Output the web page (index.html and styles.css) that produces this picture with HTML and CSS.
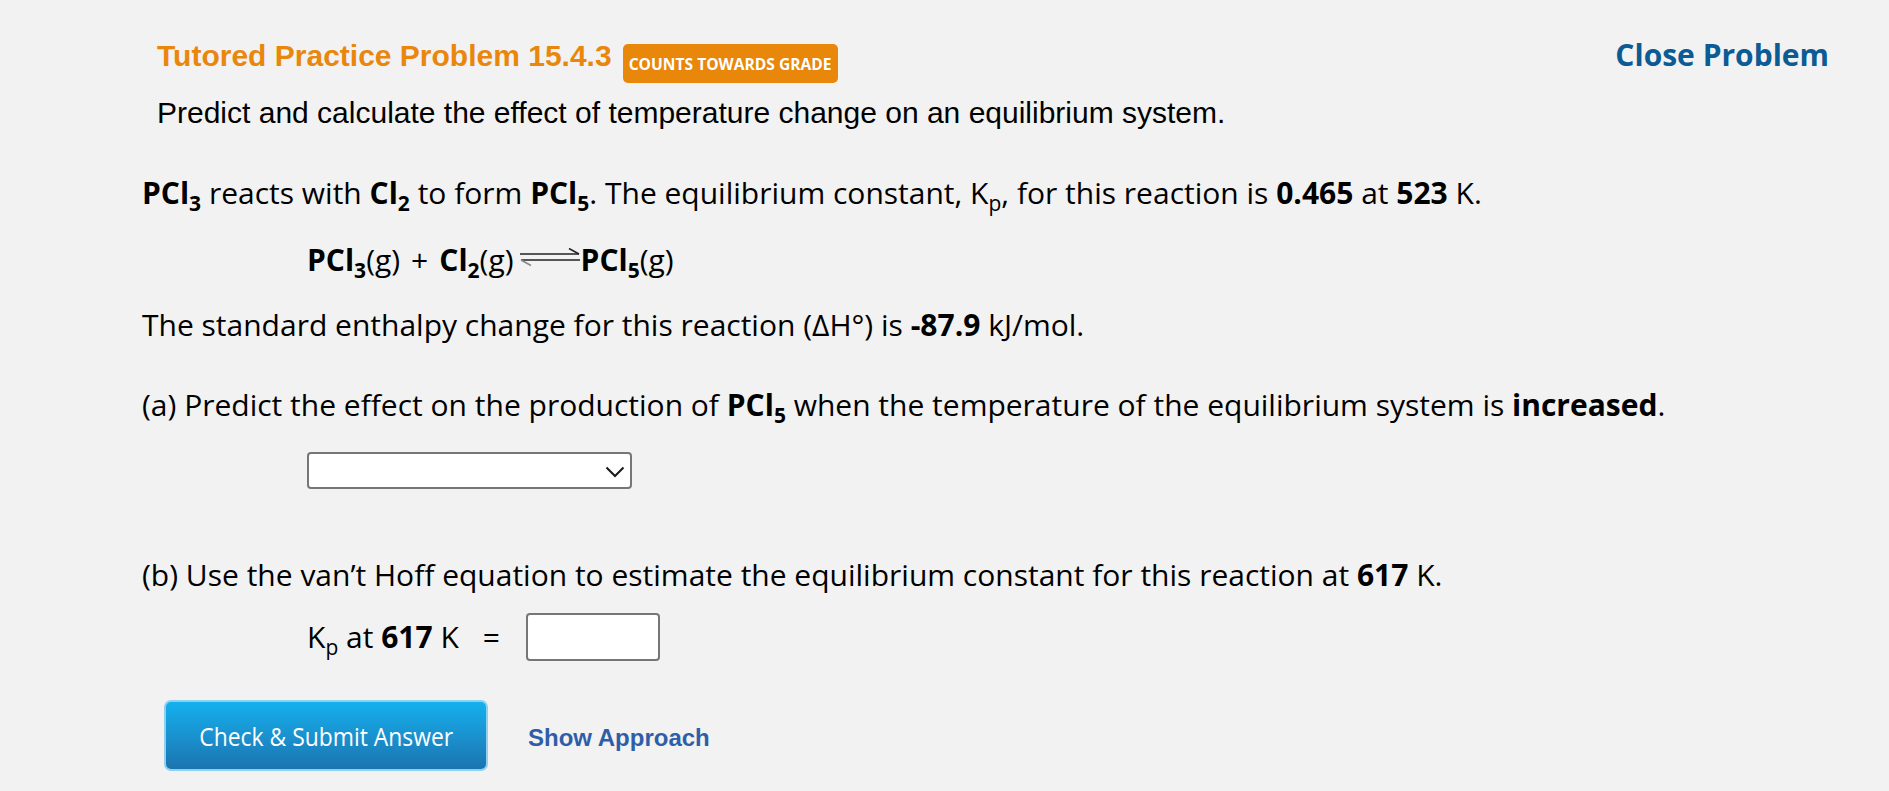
FILE: index.html
```html
<!DOCTYPE html>
<html lang="en">
<head>
<meta charset="utf-8">
<title>Tutored Practice Problem 15.4.3</title>
<link rel="stylesheet" href="styles.css">
</head>
<body>
<div class="page">
  <header class="header">
    <div class="header-main">
      <div class="title-row">
        <h1 class="title">Tutored Practice Problem 15.4.3</h1>
        <span class="badge">COUNTS TOWARDS GRADE</span>
      </div>
      <p class="subtitle">Predict and calculate the effect of temperature change on an equilibrium system.</p>
    </div>
    <a class="close-link" href="#">Close Problem</a>
  </header>

  <main class="problem">
    <p class="line intro"><b>PCl<sub>3</sub></b> reacts with <b>Cl<sub>2</sub></b> to form <b>PCl<sub>5</sub></b>. The equilibrium constant, K<sub class="reg">p</sub>, for this reaction is <b>0.465</b> at <b>523</b> K.</p>

    <p class="line equation"><b>PCl<sub>3</sub></b>(g)<span class="plus">+</span><b>Cl<sub>2</sub></b>(g)<svg class="eq-arrow" width="60" height="20" viewBox="0 0 60 20" aria-hidden="true"><line x1="0" y1="6" x2="59" y2="6" stroke="#222" stroke-width="1.6"/><line x1="59" y1="6" x2="49" y2="0.5" stroke="#222" stroke-width="1.6"/><line x1="1" y1="12" x2="60" y2="12" stroke="#222" stroke-width="1.6"/><line x1="1" y1="12" x2="11" y2="17.5" stroke="#888" stroke-width="1.6"/></svg><b>PCl<sub>5</sub></b>(g)</p>

    <p class="line enthalpy">The standard enthalpy change for this reaction (ΔH°) is <b>-87.9</b> kJ/mol.</p>

    <p class="line part-a">(a) Predict the effect on the production of <b>PCl<sub>5</sub></b> when the temperature of the equilibrium system is <b>increased</b>.</p>

    <div class="select-wrap">
      <select class="answer-select" aria-label="Effect on production">
        <option></option>
      </select>
      <svg class="chevron" width="20" height="12" viewBox="0 0 20 12" aria-hidden="true"><polyline points="1.5,1.5 10,10 18.5,1.5" fill="none" stroke="#1a1a1a" stroke-width="2"/></svg>
    </div>

    <p class="line part-b">(b) Use the van’t Hoff equation to estimate the equilibrium constant for this reaction at <b>617</b> K.</p>

    <div class="kp-row">
      <span class="kp-label">K<sub class="reg">p</sub> at <b>617</b> K</span>
      <span class="equals">=</span>
      <input class="answer-input" type="text" aria-label="Kp at 617 K">
    </div>

    <div class="actions">
      <button class="submit-btn" type="button"><span class="btn-label">Check &amp; Submit Answer</span></button>
      <a class="approach-link" href="#">Show Approach</a>
    </div>
  </main>
</div>
</body>
</html>
```

FILE: styles.css
```css
html, body {
  margin: 0;
  padding: 0;
  background: #f2f2f2;
}

.page {
  width: 1889px;
  min-height: 791px;
  color: #000;
}

.header {
  display: flex;
  justify-content: space-between;
  align-items: flex-start;
  padding: 35px 60px 0 157px;
}

.title-row {
  display: flex;
  align-items: flex-start;
  gap: 11px;
  padding-top: 1px;
}

.title {
  margin: 0;
  font-family: "Liberation Sans", Arial, sans-serif;
  font-weight: bold;
  font-size: 30px;
  line-height: 40px;
  color: #e9870c;
}

.badge {
  display: flex;
  align-items: center;
  justify-content: center;
  margin-top: 8px;
  height: 39px;
  padding: 0 6px;
  box-sizing: border-box;
  width: 215px;
  border-radius: 5px;
  background: #e8870a;
  color: #fff;
  font-family: "Open Sans", sans-serif;
  font-weight: bold;
  font-size: 15.6px;
  white-space: nowrap;
}

.subtitle {
  margin: 10px 0 0;
  font-family: "Liberation Sans", Arial, sans-serif;
  font-size: 30px;
  line-height: 40px;
}

.close-link {
  font-family: "Open Sans", sans-serif;
  font-weight: bold;
  font-size: 30px;
  line-height: 40px;
  color: #0b5b94;
  text-decoration: none;
}

.problem {
  padding-left: 142px;
  font-family: "Open Sans", sans-serif;
  font-size: 30px;
}

.line {
  margin: 0;
  line-height: 40px;
  white-space: nowrap;
}

b {
  font-weight: bold;
}

sub {
  font-size: 21px;
  line-height: 0;
  vertical-align: -7px;
  font-weight: bold;
}

sub.reg {
  font-weight: normal;
}

.intro {
  margin-top: 40px;
}

.equation {
  margin-top: 27px;
  padding-left: 165px;
}

.plus {
  margin: 0 11px;
}

.eq-arrow {
  display: inline-block;
  vertical-align: 3px;
  margin: 0 1px 0 6px;
}

.enthalpy {
  margin-top: 25px;
}

.part-a {
  margin-top: 40px;
}

.select-wrap {
  position: relative;
  margin: 27px 0 0 165px;
  width: 325px;
  height: 37px;
}

.answer-select {
  appearance: none;
  -webkit-appearance: none;
  display: block;
  width: 325px;
  height: 37px;
  box-sizing: border-box;
  border: 2px solid #767676;
  border-radius: 4px;
  background: #fff;
  margin: 0;
}

.chevron {
  position: absolute;
  right: 7px;
  top: 14px;
  pointer-events: none;
}

.part-b {
  margin-top: 66px;
}

.kp-row {
  display: flex;
  align-items: center;
  margin: 18px 0 0 165px;
  height: 48px;
  line-height: 40px;
}

.equals {
  margin-left: 24px;
  margin-right: 26px;
}

.answer-input {
  width: 134px;
  height: 48px;
  box-sizing: border-box;
  border: 2px solid #767676;
  border-radius: 4px;
  background: #fff;
  margin: 0;
  padding: 0 8px;
  font-size: 24px;
}

.actions {
  display: flex;
  align-items: center;
  gap: 40px;
  margin: 39px 0 0 22px;
}

.submit-btn {
  display: flex;
  align-items: center;
  justify-content: center;
  width: 324px;
  height: 71px;
  box-sizing: border-box;
  border: 2px solid #8fd0f1;
  border-radius: 7px;
  background: linear-gradient(to bottom, #14b0ee 0%, #1a8fcc 55%, #1b74ae 100%);
  color: #fff;
  font-family: "Open Sans", sans-serif;
  font-size: 26px;
  padding: 0;
  cursor: pointer;
}

.btn-label {
  display: inline-block;
  white-space: nowrap;
  transform: scaleX(0.88);
}

.approach-link {
  font-family: "Liberation Sans", Arial, sans-serif;
  font-weight: bold;
  font-size: 24px;
  line-height: 28px;
  margin-top: 4px;
  color: #2f5ea8;
  text-decoration: none;
}
```
